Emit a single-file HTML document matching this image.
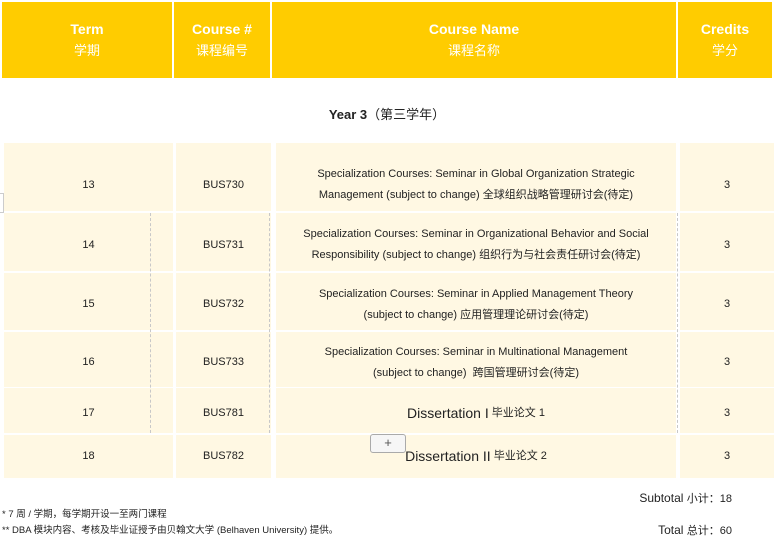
<!DOCTYPE html>
<html><head><meta charset="utf-8"><style>
body{margin:0;width:774px;height:541px;background:#fff;position:relative;overflow:hidden;font-family:"Liberation Sans","Noto Sans CJK SC",sans-serif;color:#222}
.h{position:absolute;top:2px;height:76px;background:#ffcc00;color:#fff;text-align:center;font-size:14px;line-height:22px;display:flex;flex-direction:column;justify-content:center}
.h b{font-weight:bold}
.h span{font-size:13px}
.c{position:absolute;background:#fff8e3;display:flex;align-items:center;justify-content:center;text-align:center;font-size:11px;line-height:21px;box-sizing:border-box;padding-top:6px}
.r1{padding-top:16px}
.r6{padding-top:0}
.d{position:absolute;border-left:1px dashed #c8c8c8;top:213px;height:220px}
.f{position:absolute;font-size:9.5px;left:2px}
</style></head><body>
<div class="h" style="left:2px;width:170px"><b>Term</b><span>学期</span></div>
<div class="h" style="left:174px;width:96px"><b>Course #</b><span>课程编号</span></div>
<div class="h" style="left:272px;width:404px"><b>Course Name</b><span>课程名称</span></div>
<div class="h" style="left:678px;width:94px"><b>Credits</b><span>学分</span></div>
<div style="position:absolute;top:104px;left:0;width:774px;text-align:center;font-size:13px"><b>Year 3</b>（第三学年）</div>

<div class="c r1" style="left:4px;width:169px;top:143px;height:68px">13</div>
<div class="c r1" style="left:176px;width:95px;top:143px;height:68px">BUS730</div>
<div class="c r1" style="left:276px;width:400px;top:143px;height:68px">Specialization Courses: Seminar in Global Organization Strategic<br>Management (subject to change) 全球组织战略管理研讨会(待定)</div>
<div class="c r1" style="left:680px;width:94px;top:143px;height:68px">3</div>

<div class="c" style="left:4px;width:169px;top:213px;height:58px">14</div>
<div class="c" style="left:176px;width:95px;top:213px;height:58px">BUS731</div>
<div class="c" style="left:276px;width:400px;top:213px;height:58px">Specialization Courses: Seminar in Organizational Behavior and Social<br>Responsibility (subject to change) 组织行为与社会责任研讨会(待定)</div>
<div class="c" style="left:680px;width:94px;top:213px;height:58px">3</div>

<div class="c" style="left:4px;width:169px;top:273px;height:57px">15</div>
<div class="c" style="left:176px;width:95px;top:273px;height:57px">BUS732</div>
<div class="c" style="left:276px;width:400px;top:273px;height:57px">Specialization Courses: Seminar in Applied Management Theory<br>(subject to change) 应用管理理论研讨会(待定)</div>
<div class="c" style="left:680px;width:94px;top:273px;height:57px">3</div>

<div class="c" style="left:4px;width:169px;top:332px;height:55px">16</div>
<div class="c" style="left:176px;width:95px;top:332px;height:55px">BUS733</div>
<div class="c" style="left:276px;width:400px;top:332px;height:55px">Specialization Courses: Seminar in Multinational Management<br>(subject to change)&nbsp; 跨国管理研讨会(待定)</div>
<div class="c" style="left:680px;width:94px;top:332px;height:55px">3</div>

<div class="c" style="left:4px;width:169px;top:388px;height:45px">17</div>
<div class="c" style="left:176px;width:95px;top:388px;height:45px">BUS781</div>
<div class="c" style="left:276px;width:400px;top:388px;height:45px"><span style="font-size:14px">Dissertation I</span>&nbsp;毕业论文 1</div>
<div class="c" style="left:680px;width:94px;top:388px;height:45px">3</div>

<div class="c r6" style="left:4px;width:169px;top:435px;height:43px">18</div>
<div class="c r6" style="left:176px;width:95px;top:435px;height:43px">BUS782</div>
<div class="c r6" style="left:276px;width:400px;top:435px;height:43px"><span style="font-size:14px">Dissertation II</span>&nbsp;毕业论文 2</div>
<div class="c r6" style="left:680px;width:94px;top:435px;height:43px">3</div>

<div class="d" style="left:150px"></div>
<div class="d" style="left:269px"></div>
<div class="d" style="left:677px"></div>
<div style="position:absolute;left:0;top:193px;width:3px;height:18px;border:1px solid #ccc;border-left:none;background:#fff"></div>

<div style="position:absolute;left:370px;top:434px;width:34px;height:17px;border:1px solid #aaa;border-radius:3px;background:#f6f6f6;text-align:center;font-size:13px;line-height:16px;color:#555">+</div>

<div style="position:absolute;right:42px;top:490px;font-size:12px">Subtotal <span style="font-size:11px">小计：18</span></div>
<div style="position:absolute;right:42px;top:522px;font-size:12px">Total <span style="font-size:11px">总计：60</span></div>
<div class="f" style="top:506px">* 7 周 / 学期，每学期开设一至两门课程</div>
<div class="f" style="top:522px">** DBA 模块内容、考核及毕业证授予由贝翰文大学 (Belhaven University) 提供。</div>
</body></html>
